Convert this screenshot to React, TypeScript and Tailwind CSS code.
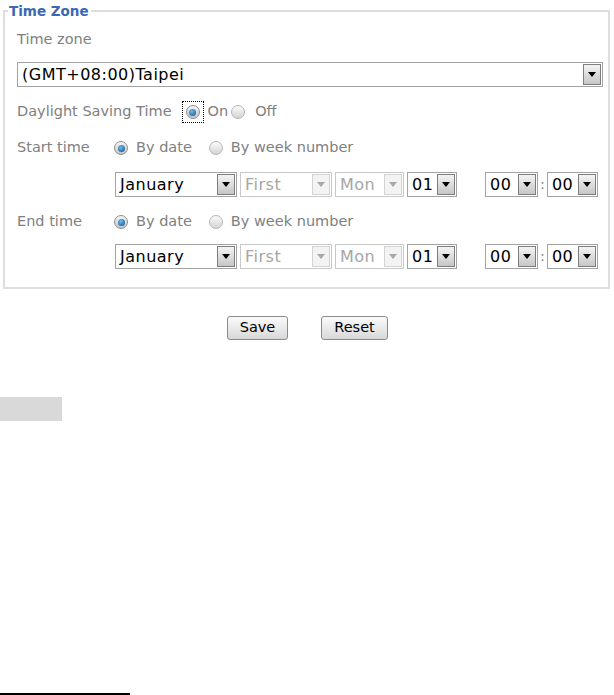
const font = "font-['DejaVu_Sans',Verdana,sans-serif]"

function Arrow({ disabled }: { disabled?: boolean }) {
  return (
    <div
      className={
        disabled
          ? 'my-[1px] mr-[1px] flex w-[18px] items-center justify-center border border-[#d4d4d4] bg-[#f3f3f3]'
          : 'my-[1px] mr-[1px] flex w-[18px] items-center justify-center border border-[#7d7d7d] bg-linear-to-b from-[#f4f4f4] to-[#c6c6c6]'
      }
    >
      <svg width="8" height="5" viewBox="0 0 8 5">
        <path d="M0 0h8L4 5z" fill={disabled ? '#a8a8a8' : '#000'} />
      </svg>
    </div>
  )
}

function Select({ value, w, disabled }: { value: string; w: string; disabled?: boolean }) {
  return (
    <div
      className={`flex h-[25px] ${w} border bg-white ${disabled ? 'border-[#c8c8c8]' : 'border-[#a3a3a3]'}`}
    >
      <span
        className={`flex flex-1 items-center overflow-hidden pl-[4px] text-[16px] tracking-[0.5px] whitespace-nowrap ${
          disabled ? 'text-[#a6a6a6]' : 'text-black'
        }`}
      >
        {value}
      </span>
      <Arrow disabled={disabled} />
    </div>
  )
}

function Radio({ checked }: { checked?: boolean }) {
  return (
    <span
      className={`flex h-[14px] w-[14px] shrink-0 items-center justify-center rounded-full border ${
        checked
          ? 'border-[#8e8e8e] bg-linear-to-b from-[#f6f6f6] to-[#c4c4c4]'
          : 'border-[#b4b4b4] bg-linear-to-b from-[#fbfbfb] to-[#d4d4d4]'
      }`}
    >
      {checked && (
        <span className="h-[7px] w-[7px] rounded-full bg-[radial-gradient(circle_at_40%_35%,#6cbcf0,#0c4f88)]" />
      )}
    </span>
  )
}

function DateRow() {
  return (
    <div className="flex items-center pl-[98px]">
      <div className="flex gap-[3px]">
        <Select value="January" w="w-[122px]" />
        <Select value="First" w="w-[92px]" disabled />
        <Select value="Mon" w="w-[69px]" disabled />
        <Select value="01" w="w-[50px]" />
      </div>
      <div className="ml-[28px] flex items-center">
        <Select value="00" w="w-[53px]" />
        <span className="mx-[2px] text-[14.5px] text-[#808080]">:</span>
        <Select value="00" w="w-[51px]" />
      </div>
    </div>
  )
}

function ModeRow({ label }: { label: string }) {
  return (
    <div className="flex h-[22px] items-center text-[14.5px] text-[#808080]">
      <span className="w-[97px]">{label}</span>
      <Radio checked />
      <span className="ml-[8px]">By date</span>
      <span className="ml-[17px]">
        <Radio />
      </span>
      <span className="ml-[8px]">By week number</span>
    </div>
  )
}

export default function App() {
  return (
    <div className={`${font} min-h-[695px] w-[614px] bg-white`}>
      <fieldset className="ml-[3px] mt-[3px] w-[607px] border-2 border-[#dedede] px-0 pb-[18px]">
        <legend className="ml-[3px] pl-[1px] pr-[2px] text-[13.5px] font-bold leading-[16px] text-[#3a68b4]">
          Time Zone
        </legend>
        <div className="flex flex-col pl-[12px] pr-[5px]">
          {/* time zone select */}
          <div className="mt-[10px] flex h-[22px] items-center text-[14.5px] text-[#808080]">Time zone</div>
          <div className="mt-[11px]">
            <Select value="(GMT+08:00)Taipei" w="w-full" />
          </div>

          {/* daylight saving */}
          <div className="mt-[14px] flex h-[22px] items-center text-[14.5px] text-[#808080]">
            <span>Daylight Saving Time</span>
            <span className="ml-[10px] flex h-[22px] w-[22px] items-center justify-center border border-dotted border-black">
              <Radio checked />
            </span>
            <span className="ml-[4px]">On</span>
            <span className="ml-[3px]">
              <Radio />
            </span>
            <span className="ml-[10px]">Off</span>
          </div>

          <div className="mt-[14px]">
            <ModeRow label="Start time" />
          </div>
          <div className="mt-[13px]">
            <DateRow />
          </div>
          <div className="mt-[14px]">
            <ModeRow label="End time" />
          </div>
          <div className="mt-[11px]">
            <DateRow />
          </div>
        </div>
      </fieldset>

      <div className="mt-[27px] flex justify-center gap-[33px] pl-[1px]">
        <button className="h-[24px] w-[61px] rounded-[3px] border border-[#8a8a8a] bg-linear-to-b from-[#fbfbfb] to-[#d8d8d8] text-[14.5px] text-black">
          Save
        </button>
        <button className="h-[24px] w-[67px] rounded-[3px] border border-[#8a8a8a] bg-linear-to-b from-[#fbfbfb] to-[#d8d8d8] text-[14.5px] text-black">
          Reset
        </button>
      </div>

      <div className="mt-[57px] h-[24px] w-[62px] bg-[#d9d9d9]" />

      <div className="mt-[272px] h-[2px] w-[130px] bg-black" />
    </div>
  )
}
